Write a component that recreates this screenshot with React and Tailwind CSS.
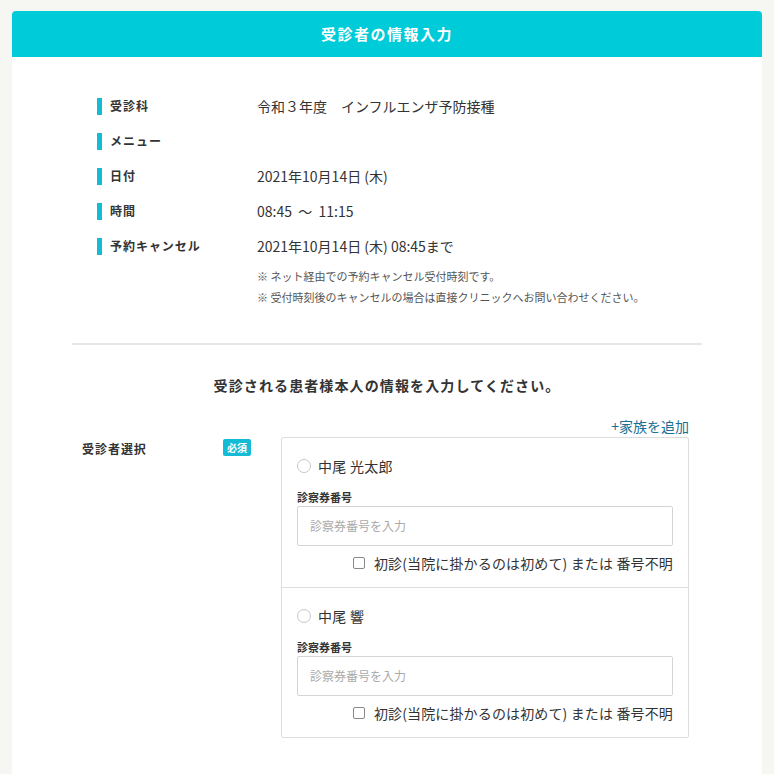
const font = { fontFamily: '"Noto Sans CJK JP", "Noto Sans", sans-serif' };

const rows = [
  { label: '受診科', value: '令和３年度　インフルエンザ予防接種' },
  { label: 'メニュー', value: '' },
  { label: '日付', value: '2021年10月14日 (木)' },
  { label: '時間', value: '08:45  〜  11:15' },
  { label: '予約キャンセル', value: '2021年10月14日 (木) 08:45まで' },
];

const patients = ['中尾 光太郎', '中尾 響'];

function PatientBlock({ name, last }) {
  return (
    <div className={`px-[15px] pt-[18px] pb-[14px] ${last ? '' : 'border-b border-[#dddddd]'}`}>
      <label className="flex items-center h-5 gap-[7px]">
        <span className="w-[14px] h-[14px] rounded-full border border-[#c8c8c8] bg-white" />
        <span className="text-[14px] text-[#333] tracking-[0.02em]">{name}</span>
      </label>
      <div className="mt-[14px] text-[11px] leading-[14px] font-bold text-[#333]">診察券番号</div>
      <div className="mt-[2px] h-10 border border-[#d4d4d4] rounded-[2px] flex items-center px-3 text-[12px] text-[#aaaaaa]">
        診察券番号を入力
      </div>
      <div className="mt-[7px] flex items-center justify-end h-5 gap-[9px]">
        <span className="w-3 h-3 rounded-[2px] border border-[#888] bg-white" />
        <span className="text-[14px] text-[#333] tracking-[0.01em]">初診(当院に掛かるのは初めて) または 番号不明</span>
      </div>
    </div>
  );
}

export default function App() {
  return (
    <div className="min-h-[774px] bg-[#f6f6f2] pt-[11px] px-[12px]" style={font}>
      <div className="bg-white rounded-t-[4px] pb-[60px]">
        {/* Header */}
        <div className="h-[46px] bg-[#00cbd8] rounded-t-[4px] flex items-center justify-center">
          <h1 className="text-white text-[15px] font-bold tracking-[0.1em]">受診者の情報入力</h1>
        </div>

        <div className="px-[60px]">
          {/* Reservation info */}
          <div className="pl-[25px] pt-[39px] pb-[35px] border-b-2 border-[#e6e6e6]">
            <div className="flex flex-col gap-[15px]">
              {rows.map(r => (
                <div key={r.label} className="flex items-center h-5">
                  <div className="w-[160px] flex items-center gap-[8px]">
                    <span className="w-[5px] h-[17px] bg-[#13bcd4]" />
                    <span className="text-[12px] font-bold text-[#333] tracking-[0.08em]">{r.label}</span>
                  </div>
                  <span className="text-[14px] text-[#333] whitespace-pre">{r.value}</span>
                </div>
              ))}
            </div>
            <div className="pl-[160px] mt-[10px] text-[11px] leading-[21px] text-[#555]">
              <p>※ ネット経由での予約キャンセル受付時刻です。</p>
              <p>※ 受付時刻後のキャンセルの場合は直接クリニックへお問い合わせください。</p>
            </div>
          </div>

          {/* Patient form */}
          <h2 className="mt-[30px] text-center text-[14px] leading-5 font-bold text-[#333] tracking-[0.08em]">
            受診される患者様本人の情報を入力してください。
          </h2>

          <div className="ml-[10px] mr-[13px] mt-[21px]">
            <div className="flex justify-end">
              <a href="#" className="text-[14px] leading-5 text-[#1a6f96]">+家族を追加</a>
            </div>
            <div className="flex mt-[1px]">
              <div className="w-[169px] mr-[30px] flex justify-between items-start pt-[2px]">
                <span className="text-[12px] leading-[18px] font-bold text-[#333] tracking-[0.08em] mt-[1px]">受診者選択</span>
                <span className="bg-[#13bcd4] text-white text-[10px] font-bold leading-[17px] px-[4px] rounded-[2px]">必須</span>
              </div>
              <div className="flex-1 border border-[#dddddd] rounded-[2px]">
                {patients.map((p, i) => (
                  <PatientBlock key={p} name={p} last={i === patients.length - 1} />
                ))}
              </div>
            </div>
          </div>
        </div>
      </div>
    </div>
  );
}
